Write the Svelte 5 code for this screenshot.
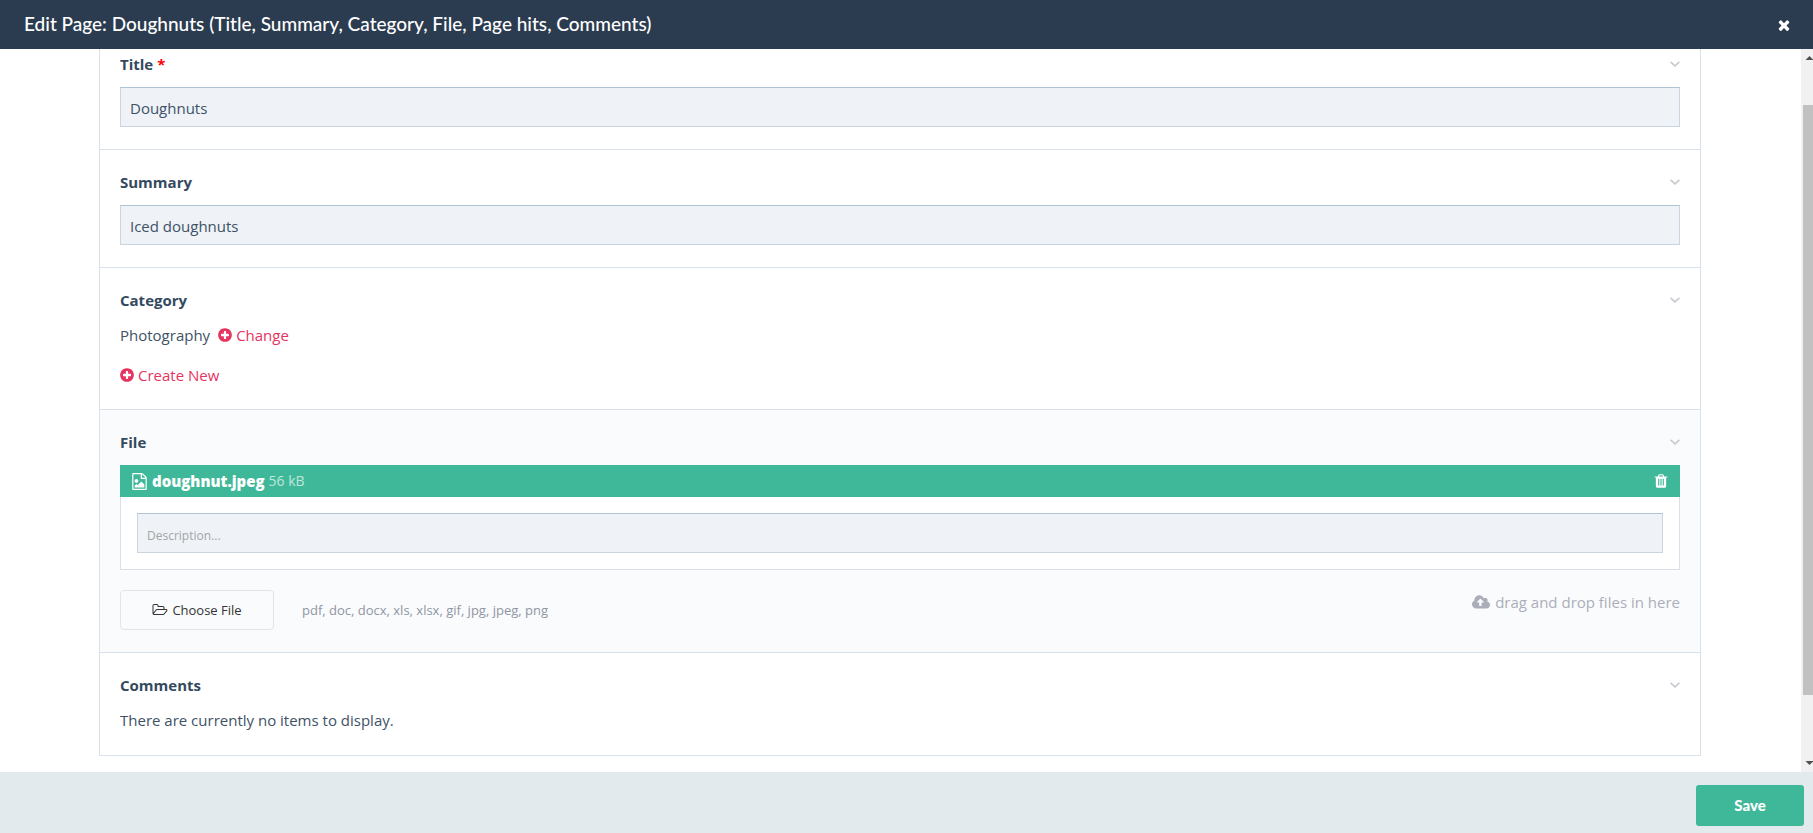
<script lang="ts">
  let title = 'Doughnuts'
  let summary = 'Iced doughnuts'
  let description = ''
  const fileTypes = ['pdf', 'doc', 'docx', 'xls', 'xlsx', 'gif', 'jpg', 'jpeg', 'png']

  let open: Record<string, boolean> = {
    title: true,
    summary: true,
    category: true,
    file: true,
    comments: true
  }

  function toggle(key: string) {
    open[key] = !open[key]
  }
</script>

{#snippet toggler(key: string, name: string)}
  <button class="toggle" type="button" aria-label="Toggle {name}" aria-expanded={open[key]} on:click={() => toggle(key)}>
    <svg width="10" height="6" viewBox="0 0 10 6"><path d="M0.6 0.8 5 4.9 9.4 0.8" fill="none" stroke="currentColor" stroke-width="1.7" /></svg>
  </button>
{/snippet}

{#snippet plus()}
  <svg width="16" height="16" viewBox="0 0 1792 1792"><path d="M1344 960v-128q0-26-19-45t-45-19h-256v-256q0-26-19-45t-45-19h-128q-26 0-45 19t-19 45v256h-256q-26 0-45 19t-19 45v128q0 26 19 45t45 19h256v256q0 26 19 45t45 19h128q26 0 45-19t19-45v-256h256q26 0 45-19t19-45zm320-64q0 209-103 385.5t-279.5 279.5-385.5 103-385.5-103-279.5-279.5-103-385.5 103-385.5 279.5-279.5 385.5-103 385.5 103 279.5 279.5 103 385.5z" /></svg>
{/snippet}

<div class="modal">
  <header class="modal-header">
    <h1>Edit Page: Doughnuts (Title, Summary, Category, File, Page hits, Comments)</h1>
    <button class="close" type="button" aria-label="Close">
      <svg width="16" height="16" viewBox="0 0 1792 1792"><path d="M1490 1322q0 40-28 68l-136 136q-28 28-68 28t-68-28l-294-294-294 294q-28 28-68 28t-68-28l-136-136q-28-28-28-68t28-68l294-294-294-294q-28-28-28-68t28-68l136-136q28-28 68-28t68 28l294 294 294-294q28-28 68-28t68 28l136 136q28 28 28 68t-28 68l-294 294 294 294q28 28 28 68z" /></svg>
    </button>
  </header>

  <div class="modal-body">
    <form class="fields" id="edit-form" on:submit|preventDefault>
      <section class="field">
        <div class="field-head">
          <label for="title">Title <span class="required">*</span></label>
          {@render toggler('title', 'Title')}
        </div>
        {#if open.title}
          <input id="title" class="text-input" type="text" bind:value={title} />
        {/if}
      </section>

      <section class="field">
        <div class="field-head">
          <label for="summary">Summary</label>
          {@render toggler('summary', 'Summary')}
        </div>
        {#if open.summary}
          <input id="summary" class="text-input" type="text" bind:value={summary} />
        {/if}
      </section>

      <section class="field">
        <div class="field-head">
          <h2>Category</h2>
          {@render toggler('category', 'Category')}
        </div>
        {#if open.category}
          <div class="category">
            <p>Photography <a class="action" href="#change">{@render plus()}Change</a></p>
            <p><a class="action first" href="#create">{@render plus()}Create New</a></p>
          </div>
        {/if}
      </section>

      <section class="field tinted">
        <div class="field-head">
          <h2>File</h2>
          {@render toggler('file', 'File')}
        </div>
        {#if open.file}
          <div class="upload">
            <div class="upload-bar">
              <svg width="17" height="17" viewBox="0 0 1792 1792"><path d="M1596 380q28 28 48 76t20 88v1152q0 40-28 68t-68 28h-1344q-40 0-68-28t-28-68v-1600q0-40 28-68t68-28h896q40 0 88 20t76 48zm-444-244v376h376q-10-29-22-41l-313-313q-12-12-41-22zm384 1528v-1024h-416q-40 0-68-28t-28-68v-416h-768v1536h1280zm-128-448v320h-1024v-192l192-192 128 128 384-384zm-832-192q-80 0-136-56t-56-136 56-136 136-56 136 56 56 136-56 136-136 56z" /></svg>
              <strong>doughnut.jpeg</strong>
              <span class="size">56 kB</span>
              <button class="remove" type="button" aria-label="Delete file">
                <svg width="16" height="16" viewBox="0 0 1792 1792"><path d="M704 1376v-704q0-14-9-23t-23-9h-64q-14 0-23 9t-9 23v704q0 14 9 23t23 9h64q14 0 23-9t9-23zm256 0v-704q0-14-9-23t-23-9h-64q-14 0-23 9t-9 23v704q0 14 9 23t23 9h64q14 0 23-9t9-23zm256 0v-704q0-14-9-23t-23-9h-64q-14 0-23 9t-9 23v704q0 14 9 23t23 9h64q14 0 23-9t9-23zm-544-992h448l-48-117q-7-9-17-11h-317q-10 2-17 11zm928 32v64q0 14-9 23t-23 9h-96v948q0 83-47 143.5t-113 60.5h-832q-66 0-113-58.5t-47-141.5v-952h-96q-14 0-23-9t-9-23v-64q0-14 9-23t23-9h309l70-167q15-37 54-63t79-26h320q40 0 79 26t54 63l70 167h309q14 0 23 9t9 23z" /></svg>
              </button>
            </div>
            <div class="upload-body">
              <input class="text-input" type="text" placeholder="Description..." aria-label="Description" bind:value={description} />
            </div>
          </div>
          <div class="upload-actions">
            <button class="choose" type="button">
              <svg width="16" height="14" viewBox="0 0 2048 1792"><path d="M1845 931q0-35-53-35h-1088q-40 0-85.5 21.5t-71.5 52.5l-294 363q-18 24-18 40 0 35 53 35h1088q40 0 86-22t71-53l294-363q18-22 18-39zm-1141-163h768v-160q0-40-28-68t-68-28h-576q-40 0-68-28t-28-68v-64q0-40-28-68t-68-28h-320q-40 0-68 28t-28 68v853l256-315q44-53 116-87.5t140-34.5zm1269 163q0 62-46 120l-295 363q-43 53-116 87.5t-140 34.5h-1088q-92 0-158-66t-66-158v-960q0-92 66-158t158-66h320q92 0 158 66t66 158v32h544q92 0 158 66t66 158v160h192q54 0 99 24.5t67 70.5q15 32 15 68z" /></svg>
              Choose File
            </button>
            <span class="types">{fileTypes.join(', ')}</span>
            <span class="drop-hint">
              <svg width="18" height="17" viewBox="0 0 1920 1792"><path d="M1280 864q0-14-9-23l-352-352q-9-9-23-9t-23 9l-351 351q-10 12-10 24 0 14 9 23t23 9h224v352q0 13 9.5 22.5t22.5 9.5h192q13 0 22.5-9.5t9.5-22.5v-352h224q13 0 22.5-9.5t9.5-22.5zm640 288q0 159-112.5 271.5t-271.5 112.5h-1088q-185 0-316.5-131.5t-131.5-316.5q0-130 70-240t188-165q-2-30-2-43 0-212 150-362t362-150q156 0 285.5 87t188.5 231q71-62 166-62 106 0 181 75t75 181q0 76-41 138 130 31 213.5 135.5t83.5 238.5z" /></svg>
              drag and drop files in here
            </span>
          </div>
        {/if}
      </section>

      <section class="field">
        <div class="field-head">
          <h2>Comments</h2>
          {@render toggler('comments', 'Comments')}
        </div>
        {#if open.comments}
          <p class="empty">There are currently no items to display.</p>
        {/if}
      </section>
    </form>

    <div class="scrollbar" aria-hidden="true">
      <svg width="17" height="17" viewBox="0 0 17 17"><path d="M4.5 11h8L8.5 7z" /></svg>
      <div class="track"><div class="thumb"></div></div>
      <svg width="17" height="17" viewBox="0 0 17 17"><path d="M4.5 6h8l-4 4z" /></svg>
    </div>
  </div>

  <footer class="modal-footer">
    <button class="save" type="submit" form="edit-form">Save</button>
  </footer>
</div>

<style>
  :global(body) {
    margin: 0;
    background: #fff;
  }

  .modal {
    display: flex;
    flex-direction: column;
    height: 100vh;
    overflow: hidden;
    font-family: 'Open Sans', 'Noto Sans', sans-serif;
    font-size: 15px;
    line-height: 24px;
    color: #3e5266;
  }

  .modal *,
  .modal {
    box-sizing: border-box;
  }

  svg {
    display: block;
    flex: none;
    fill: currentColor;
  }

  button {
    padding: 0;
    border: 0;
    background: none;
    font: inherit;
    color: inherit;
    cursor: pointer;
  }

  h1,
  h2,
  p {
    margin: 0;
  }

  .modal-header {
    display: flex;
    flex: none;
    align-items: center;
    justify-content: space-between;
    height: 49px;
    padding: 0 21px 0 24px;
    background: #2b3c51;
    color: #fff;
  }

  h1 {
    padding-bottom: 2px;
    font-family: Lato, sans-serif;
    font-size: 19px;
    font-weight: 500;
  }

  .modal-body {
    display: flex;
    flex: 1;
    min-height: 0;
    overflow: hidden;
  }

  .fields {
    flex: 1;
    min-width: 0;
    margin: 0 100px 16px 99px;
  }

  .field {
    padding: 20px 20px 22px;
    border: 1px solid #d8e1ea;
    border-top: 0;
  }

  .field:first-child {
    padding-top: 3px;
  }

  .tinted {
    background: #fafbfd;
  }

  .field-head {
    display: flex;
    align-items: center;
    justify-content: space-between;
    height: 24px;
    margin-bottom: 11px;
  }

  .field-head label,
  h2 {
    font-size: 15px;
    font-weight: 700;
    color: #34495e;
  }

  .required {
    color: #f00;
  }

  .toggle {
    color: #c8ccd1;
  }

  .text-input {
    display: block;
    width: 100%;
    height: 40px;
    padding: 2px 9px 0;
    border: 1px solid #c9d6e2;
    border-top-color: #b0c3d4;
    border-radius: 0;
    background: #eff3f8;
    font: inherit;
    color: #3e5266;
  }

  .text-input::placeholder {
    font-size: 12px;
    color: #a4a4a4;
    opacity: 1;
  }

  .category {
    display: flex;
    flex-direction: column;
    gap: 16px;
  }

  .category p {
    display: flex;
    gap: 7px;
  }

  .action {
    display: flex;
    align-items: center;
    gap: 3px;
    color: #e6335f;
    text-decoration: none;
  }

  .first {
    margin-left: -1px;
  }

  .empty {
    padding-bottom: 1px;
  }

  .upload-bar {
    display: flex;
    align-items: center;
    gap: 4px;
    height: 32px;
    padding: 0 11px;
    background: #3fb899;
    color: #fff;
  }

  .upload-bar strong {
    font-weight: 800;
  }

  .size {
    font-size: 14px;
    opacity: 0.65;
  }

  .remove {
    margin-left: auto;
  }

  .upload-body {
    padding: 16px;
    border: 1px solid #d8e1ea;
    border-top: 0;
    background: #fff;
  }

  .upload-actions {
    display: flex;
    align-items: center;
    margin-top: 20px;
  }

  .choose {
    display: flex;
    align-items: center;
    justify-content: center;
    gap: 4px;
    width: 154px;
    height: 40px;
    border: 1px solid #e2e4e7;
    border-radius: 4px;
    font-size: 13px;
    color: #333;
  }

  .types {
    margin-left: 28px;
    font-size: 13px;
    color: #8f96a3;
  }

  .drop-hint {
    display: flex;
    align-items: center;
    align-self: flex-start;
    gap: 5px;
    margin-left: auto;
    color: #abaeb9;
  }

  .scrollbar {
    display: flex;
    flex: none;
    flex-direction: column;
    width: 12px;
    overflow: hidden;
    background: #f1f1f1;
    color: #505050;
  }

  .track {
    display: flex;
    flex: 1;
    flex-direction: column;
    padding-left: 2px;
  }

  .track::before {
    content: '';
    flex: 39;
  }

  .track::after {
    content: '';
    flex: 60;
  }

  .thumb {
    flex: 590;
    background: #c1c1c1;
  }

  .modal-footer {
    display: flex;
    flex: none;
    align-items: center;
    justify-content: flex-end;
    height: 61px;
    padding: 5px 9px 0;
    background: #e2eaed;
  }

  .save {
    width: 108px;
    height: 41px;
    border-radius: 3px;
    background: #3fb899;
    font-family: Lato, sans-serif;
    font-size: 15px;
    font-weight: 900;
    color: #fff;
  }
</style>
